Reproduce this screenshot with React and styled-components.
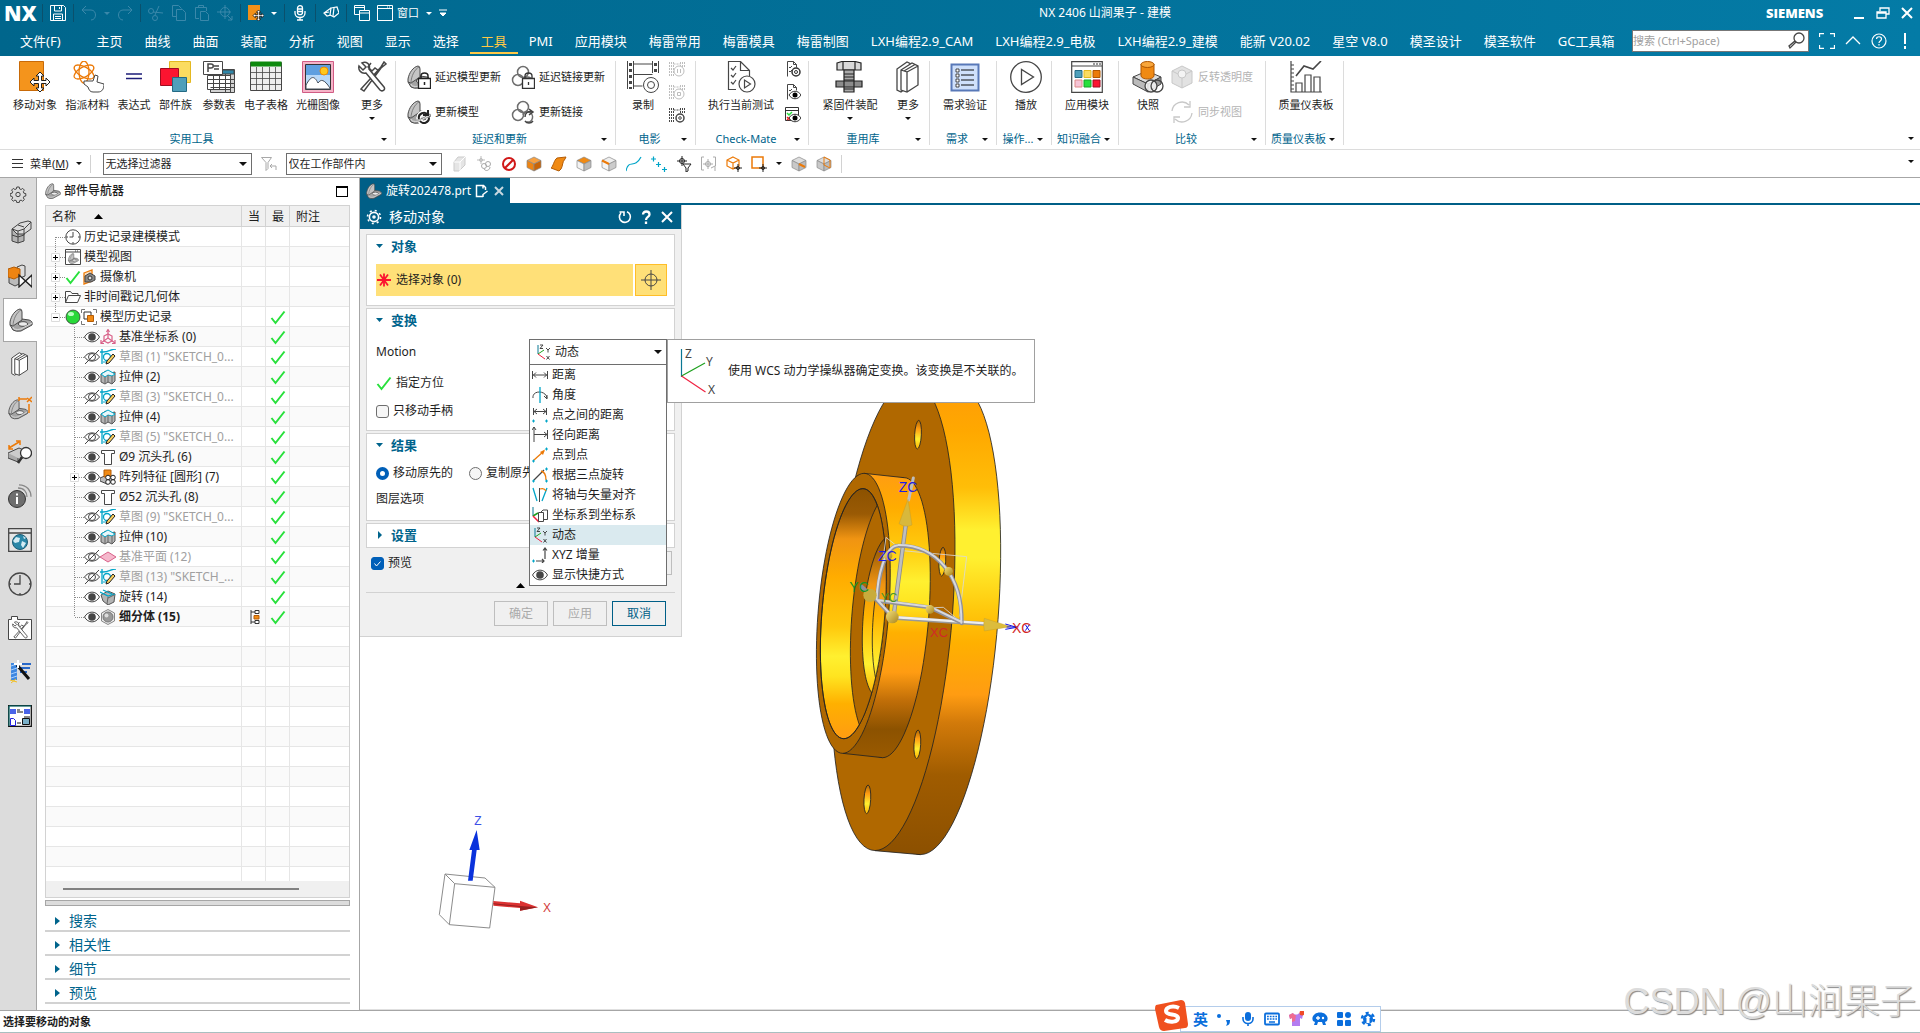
import React from "react";
import styled, { createGlobalStyle, css } from "styled-components";

const colors = {
  teal: "#005f87",
  link: "#00648c",
  text: "#1e1e1e",
  muted: "#a0a0a0",
  line: "#d2d2d2",
  edge: "#a6a6a6",
  panel: "#f0f0f0",
  orange: "#ec7a08",
  ink: "#464646",
  tick: "#28e03c",
  cyan: "#00a5c8",
};

const GlobalStyle = createGlobalStyle`
  * {
    box-sizing: border-box;
  }
  body {
    margin: 0;
    overflow: hidden;
    background: #fff;
    color: ${colors.text};
    font-family: "Noto Sans", "Noto Sans CJK SC", sans-serif;
    font-size: 12px;
    line-height: 16px;
  }
  button, input, select {
    font: inherit;
    color: inherit;
    margin: 0;
  }
  button {
    border: 0;
    padding: 0;
    background: none;
  }
  svg {
    display: block;
    flex: none;
  }
`;

/* ---------- icons ---------- */

const MOVE =
  "M21 11l4 4h-2.5v4.5H27V17l4 4-4 4v-2.5h-4.5V27H25l-4 4-4-4h2.5v-4.5H15V25l-4-4 4-4v2.5h4.5V15H17z";

const bracket = (
  <g stroke="#4a4a4a">
    <path d="M1 17l12-6 7 1q4 1 3 5l-11 6q-5 1-8-1z" fill="#a4a4a4" />
    <path d="M1 14C2 8 6 2 11 1q2 0 2 3v8L4 18l-3-1z" fill="#c4c4c4" />
    <path d="M4 18C4 11 8 4 12 2" fill="none" stroke="#7c7c7c" />
    <ellipse cx="14" cy="16" rx="4.500" ry="2.300" fill="#ececec" />
    <path d="M4 19l1 2q4 1 7 0l11-6" fill="none" stroke="#dadada" />
  </g>
);

const chain = (
  <g fill="none" stroke="#6e6e6e" strokeWidth="1.5">
    <circle cx="7" cy="15" r="5.5" />
    <circle cx="12" cy="7" r="5.5" />
    <path d="M12 15a5 5 0 1 1 4 7" />
  </g>
);

const film = (
  <g fill="none" stroke="currentColor">
    <path d="M.5 1v14M4.500 1v14M4.500 3h7M11.500 1v6M15.500 1v6M2.500 1v14M13.500 1v6" strokeDasharray="2 1" />
  </g>
);

const sheet = <path d="M2.500 15.500V.5h6l3 3v3M8.500.5v3h3M4 6l1 1 2-2M4 10l1 1 2-2" fill="none" stroke={colors.ink} />;

const wrench = (
  <g fill="#fff" stroke={colors.ink} strokeWidth="1.500">
    <path d="M5 28L25 6l3-5 2 2-5 4L8 30z" />
    <path d="M3 5l4 4 3-3-4-4c4-2 9 1 7 6l15 18c2 3-2 5-4 3L10 12C5 13 2 9 3 5z" />
    <path d="M15 2l-3 4 4 4 3-3 4 3" fill="none" />
  </g>
);

const books = (
  <g fill="#fff" stroke={colors.ink} strokeWidth="1.300">
    <path d="M5 8l10-7 4 2v20L9 31l-4-2z" />
    <path d="M9 9l11-7 6 3v19l-11 7-6-2zM9 9l6 2v20M15 11l11-6M12 10l11-6.500" />
  </g>
);

const cube = (a, b, c) => (
  <g stroke="#8a8a8a" strokeWidth=".7">
    <path d="M8 1l7 3.500-7 3.500-7-3.500z" fill={a} />
    <path d="M1 4.500L8 8v7l-7-3.500z" fill={b} />
    <path d="M15 4.500L8 8v7l7-3.500z" fill={c} />
  </g>
);

const target = (x, y, r, color) => (
  <g fill="none" stroke={color || "#222"}>
    <circle cx={x} cy={y} r={r - 1.5} />
    <path d={`M${x - r - 1} ${y}h${2 * r + 2}M${x} ${y - r - 1}v${2 * r + 2}`} />
  </g>
);

const eye = (
  <g>
    <path d="M.5 8C4 1.500 12 1.500 15.500 8 12 14.500 4 14.500.5 8z" fill="#fff" stroke={colors.ink} />
    <circle cx="8" cy="8" r="3.800" fill={colors.ink} />
  </g>
);

const gearShape = (
  <g fill="none" stroke="currentColor">
    <path d="M6.800 1h2.400l.4 1.900 1.500.6 1.600-1.100 1.700 1.700-1.100 1.600.6 1.500 1.900.4v2.400l-1.900.4-.6 1.500 1.100 1.600-1.700 1.700-1.600-1.100-1.500.6-.4 1.900H6.800l-.4-1.900-1.500-.6-1.600 1.100-1.700-1.700 1.100-1.600-.6-1.500L.2 10V7.600l1.900-.4.6-1.500-1.100-1.600 1.700-1.700 1.600 1.100 1.500-.6z" />
    <circle cx="8" cy="8.500" r="2.200" />
  </g>
);

const wcs = (
  <g fill="none">
    <path d="M3 1v9" stroke="#0b7894" />
    <path d="M3 10l6-4" stroke="#1ea01e" />
    <path d="M3 10l7 5" stroke="#f02040" />
    <path d="M5 1h3L5 4.500h3M11 4l2 2 2-2M13 6v2.500M11.500 12l3 3.500M14.500 12l-3 3.500" stroke="#333" strokeWidth=".9" />
  </g>
);

const icons = {
  save: [16, <g fill="none" stroke="#fff"><path d="M.5.5h13l2 2v13H.5z" /><path d="M4.500 1v5h7V1M9.500 2v2M3.500 15V9h9v6M5 11.500h6M5 13.500h6" /></g>],
  undo: [16, <path d="M5 1L1 5l4 4M1 5h9c6 0 6 10 0 10" fill="none" stroke="#3a88aa" />],
  redo: [16, <path d="M11 1l4 4-4 4M15 5H6C0 5 0 15 6 15" fill="none" stroke="#3a88aa" />],
  cut: [16, <g fill="none" stroke="#3a88aa"><circle cx="3" cy="6" r="2.500" /><circle cx="7" cy="13" r="2.500" /><path d="M5 7l10 1M7 10l4-9" /></g>],
  copy: [16, <path d="M5.500 4.500h6l3 3v8h-9zM5 11.500H1.500V.5h6l3 3" fill="none" stroke="#3a88aa" />],
  paste: [16, <path d="M5 13.500H1.500v-11h11V6M4.500 2.500V.5h5v2M6.500 6.500h5l3 3v6h-8z" fill="none" stroke="#3a88aa" />],
  csys: [16, <g fill="none" stroke="#3a88aa"><circle cx="8" cy="7" r="4.500" /><path d="M8 0v14M0 7h14M10 10l5 5M15 11v4h-4" /></g>],
  moveSmall: [16, <g><path d="M0 0h12v15H0z" fill="#f29018" /><path d={MOVE} transform="matrix(.55 0 0 .55 -1 -1)" fill="#fff" stroke="#111" strokeWidth="1.500" /></g>],
  mic: [16, <g fill="none" stroke="#fff" strokeWidth="1.300"><rect x="5.500" y=".7" width="5" height="9" rx="2.500" /><path d="M3 6v2c0 6 10 6 10 0V6M8 12v3M5 15h6M6 4h4M6 6.500h4" /></g>],
  eraser: [16, <g fill="none" stroke="#fff" strokeWidth="1.200"><path d="M8 3l6-1 2 6-5 4-4-2z" /><path d="M8 3L1 8l3 3 4-1M11 3l-1 8M1 8l5-1" /></g>],
  windows: [16, <g fill="none" stroke="#fff"><path d="M5 9.500H.5v-9h10V5M.5 2.500h10" /><path d="M5.500 5.500h10v10h-10zM5.500 8h10" /></g>],
  window: [16, <path d="M.5.5h15v15H.5zM.5 3.500h15M10 2h1M12 2h1" fill="none" stroke="#fff" />],
  magnifier: [18, <g fill="#fff" stroke={colors.ink} strokeWidth="1.300"><path d="M8 10l-6 6-1-2 6-5z" /><circle cx="11" cy="6" r="5" /></g>],
  full: [16, <path d="M.5 4V.5H5M11 .5h4.500V4M15.500 12v3.500H11M5 15.500H.5V12" fill="none" stroke="#fff" strokeWidth="1.300" />],
  up: [16, <path d="M1 11l7-7 7 7" fill="none" stroke="#fff" strokeWidth="1.300" />],
  help: [16, <g fill="none" stroke="#fff" strokeWidth="1.200"><circle cx="8" cy="8" r="7" /><path d="M5.500 6c0-3 5-3 5 0 0 2-2.500 2-2.500 4M8 11v1.500" /></g>],
  bang: [16, <path d="M8 0v11M8 13v3" stroke="#fff" strokeWidth="2" />],
  minimize: [16, <path d="M3 13h10" stroke="#fff" strokeWidth="2" />],
  restore: [16, <path d="M5 6V3h9v6h-3M2 7h9v6H2zM2 8h9" fill="none" stroke="#fff" strokeWidth="1.300" />],
  close: [16, <path d="M3 3l10 10M13 3L3 13" stroke="#fff" strokeWidth="2" />],

  move: [32, <g><path d="M.5.5h24v29H.5z" fill="#f4941c" stroke="#c86a08" /><path d={MOVE} fill="#fff" stroke="#222" /></g>],
  material: [32, <g><g fill="none" stroke="#ec7a08" strokeWidth="1.300"><ellipse cx="12" cy="11" rx="11" ry="5" transform="rotate(30 12 11)" /><ellipse cx="12" cy="11" rx="11" ry="5" transform="rotate(-30 12 11)" /><ellipse cx="12" cy="11" rx="11" ry="5" transform="rotate(90 12 11)" /></g><path d="M12 20h9l2-6 3 1-1 6 7 2c0 5-2 8-6 8h-5c-3 0-4-2-5-5l-4-3z" fill="#fff" stroke={colors.ink} /></g>],
  equals: [32, <path d="M8 13h16M8 17.500h16" stroke="#1c1c78" strokeWidth="1.500" />],
  family: [32, <g><path d="M9.500.5h21v21h-21z" fill="#fbdc60" stroke="#e4b820" /><path d="M.5 7.500h18v17H.5z" fill="#fb1430" stroke="#a00c20" /><path d="M12.500 16.500h14v14h-14z" fill="#4f9fba" stroke="#246a84" /></g>],
  params: [32, <g stroke={colors.ink}><path d="M7.500 8.500h24v23h-24z" fill="#d2d2d2" /><path d="M8 9h23v4H8z" fill="#2f86a8" /><path d="M4.500 14.500h23v14h-23z" fill="#fff" /><path d="M4.500 18.500h27M4.500 22.500h27M7.500 26.500h24M10.500 13v16M16.500 13v16M22.500 13v18M27.500 13v18" fill="none" /><path d="M.5.5h19v13H.5z" fill="#fff" /><path d="M5 11V3h3c3 0 3 4 0 4H5M11 5h5M11 8h5" fill="none" strokeWidth="1.500" /></g>],
  spreadsheet: [32, <g><path d="M.5 1.500h31v28H.5z" fill="#eee" stroke={colors.ink} /><path d="M.5.500h31v5H.5z" fill="#0d8a0d" /><path d="M.5 11.500h31M.5 17.500h31M.5 23.500h31M6.500 6v24M12.500 6v24M19.500 6v24M25.500 6v24" fill="none" stroke={colors.ink} strokeWidth=".8" /></g>],
  raster: [32, <g><path d="M.5.5h31v31H.5z" fill="#f5b4c8" stroke="#d05c84" /><path d="M3.500 3.500h25v25h-25z" fill="#b8d8f8" stroke="#333" /><path d="M4 4h24v10H4z" fill="#5f9fe0" /><circle cx="22" cy="10" r="4" fill="#ffc81e" stroke="#f08c00" /><path d="M4 24c5-9 8-10 12-2 3-4 6-4 12 5v1H4z" fill="#fff" stroke="#444c58" /></g>],
  tools: [32, wrench],
  lockModel: [24, <g>{bracket}<path d="M11.500 13.500h12v10h-12z" fill="#fff" stroke="#222" strokeWidth="1.300" /><path d="M14 13v-2c0-4 7-4 7 0v2M17.500 17v3" fill="none" stroke="#222" strokeWidth="1.500" /></g>],
  lockLink: [24, <g>{chain}<path d="M11.500 13.500h12v10h-12z" fill="#fff" stroke="#333" strokeWidth="1.300" /><path d="M14 13v-2c0-4 7-4 7 0v2M17.500 17v3" fill="none" stroke="#333" strokeWidth="1.300" /></g>],
  updateModel: [24, <g>{bracket}<g fill="none" strokeWidth="5" stroke="#fff"><path d="M12 19a5 5 0 0 1 9-4M22 18a5 5 0 0 1-9 3" /></g><path d="M12 19a5 5 0 0 1 9-4M21 10v5h-5M22 18a5 5 0 0 1-9 3" fill="none" stroke="#222" strokeWidth="2" /></g>],
  updateLink: [24, <g>{chain}<path d="M14 17a5 5 0 0 1 7-5M18 9l4 3-4 3M22 21a5 5 0 0 1-8 0" fill="none" stroke="#444" strokeWidth="1.500" /></g>],
  record: [32, <g fill="none" stroke={colors.ink}><path d="M.5 0v28M6.500 0v28M25.500 0v12M31.500 0v12M6.500 3h19M6.500 13.500h19M6.500 25h9" /><path d="M3.500 2v26M28.500 2v12" strokeWidth="3" strokeDasharray="3 3" /><circle cx="24" cy="24" r="7.500" fill="#fff" /><circle cx="24" cy="24" r="3.500" /></g>],
  filmPause: [16, <g opacity=".35">{film}<circle cx="10" cy="10" r="5" fill="#fff" stroke="currentColor" /><path d="M8.500 8v4M11.500 8v4" stroke="currentColor" /></g>],
  filmStop: [16, <g opacity=".35">{film}<circle cx="10" cy="10" r="5" fill="#fff" stroke="currentColor" /><path d="M8.500 8.500h3v3h-3z" fill="none" stroke="currentColor" /></g>],
  filmGear: [16, <g>{film}<circle cx="11" cy="11" r="4" fill="#fff" stroke="currentColor" strokeWidth="1.500" /><circle cx="11" cy="11" r="1.300" fill="none" stroke="currentColor" /></g>],
  runTest: [32, <g fill="none" stroke={colors.ink} strokeWidth="1.200"><path d="M11 28.500H3.500V.5h12l9 9V15M15.500.5v9h9M6 7l2 2 3-4M6 14l2 2 3-4M6 21l2 2 3-4" /><circle cx="22" cy="23" r="8" fill="#fff" /><path d="M19.500 19v8l6-4z" /></g>],
  sheetGear: [16, <g>{sheet}<circle cx="11" cy="11" r="4" fill="#fff" stroke="#333" strokeWidth="1.500" /><circle cx="11" cy="11" r="1.500" fill="none" stroke="#333" /></g>],
  sheetEye: [16, <g>{sheet}<path d="M4 11c3-5 9-5 12 0-3 5-9 5-12 0z" fill="#fff" stroke="#333" /><circle cx="10" cy="11" r="2.500" /></g>],
  winEye: [16, <g><path d="M.5.5h13v13H.5zM.5 3.500h13" fill="#fff" stroke="#333" /><path d="M2 6l2 2 3-3" fill="none" stroke={colors.tick} strokeWidth="1.500" /><path d="M2 10l3 3M5 10l-3 3" stroke="#e22" strokeWidth="1.300" /><path d="M4 11c3-5 9-5 12 0-3 5-9 5-12 0z" fill="#fff" stroke="#333" /><circle cx="10" cy="11" r="2.500" /></g>],
  bolt: [32, <g stroke="#222" strokeWidth="1.200"><path d="M3 2l5-1.500h13L27 2v7H3z" fill="#d8d8d8" /><path d="M9 1v8M21 1v8" /><path d="M10 9h10v22H10z" fill="#aaa" /><path d="M10 13h10M10 16h10M10 19h10M10 28h10" /><path d="M2 20h26v6H2z" fill="#8c8c8c" /><path d="M10 20v6M20 20v6" /></g>],
  books: [32, books],
  checklist: [32, <g><path d="M2.500 3.500h27v26h-27z" fill="#cfe0fb" stroke="#5878b8" strokeWidth="2" /><path d="M12 9h13M12 14h13M12 19h13M12 24h13" stroke="#111" /><path d="M7 8h3v3H7zM7 13h3v3H7zM7 18h3v3H7zM7 23h3v3H7z" fill="#fff" stroke="#222" strokeWidth=".8" /></g>],
  play: [32, <g fill="none" stroke={colors.ink} strokeWidth="1.300"><circle cx="16" cy="16" r="15.300" /><path d="M11.500 8.500v15l12-7.500z" /></g>],
  modules: [32, <g><path d="M.7.700h30.600v30.600H.7zM1 5h30" fill="#fff" stroke={colors.ink} strokeWidth="1.200" /><path d="M22 3h2M25 3h2M28 3h2" stroke="#333" /><g strokeWidth="1"><path d="M4 9.500h7v7H4z" fill="#4f9fba" stroke="#246a84" /><path d="M13 9.500h7v7h-7z" fill="#fbdc60" stroke="#e4b820" /><path d="M22 9.500h7v7h-7z" fill="#ec7a08" stroke="#b05600" /><path d="M4 19h7v7H4z" fill="#f5c4d6" stroke="#d88" /><path d="M13 19h7v7h-7z" fill="#28e03c" stroke="#18a028" /><path d="M22 19h7v7h-7z" fill="#fb1430" stroke="#a00c20" /></g></g>],
  snapshot: [32, <g stroke={colors.ink}><path d="M1 16l14-6 14 6-13 7z" fill="#ddd" /><path d="M1 16l15 7v8L1 23z" fill="#bbb" /><path d="M29 16l-13 7v8l13-8z" fill="#999" /><path d="M9 3v12c1 4 12 4 13 0V3z" fill="#f08a14" stroke="#b05600" /><ellipse cx="15.500" cy="3.500" rx="6.500" ry="3" fill="#f8a63c" stroke="#b05600" /><circle cx="19" cy="25" r="6" fill="#fff" fillOpacity=".8" strokeWidth="1.300" /><circle cx="25" cy="25" r="6" fill="none" strokeWidth="1.300" /></g>],
  cubeGrey: [24, <g stroke="#c8c8c8"><path d="M12 1l10 5v12l-10 5-10-5V6z" fill="#e2e2e2" /><path d="M2 6l10 5 10-5M12 11v12" fill="none" /><circle cx="12" cy="9" r="4" fill="#f4f4f4" /></g>],
  sync: [24, <path d="M2 11a10 10 0 0 1 17-6M20 1v6h-6M22 13a10 10 0 0 1-17 6M4 23v-6h6" fill="none" stroke="#c8c8c8" strokeWidth="1.300" />],
  chart: [32, <g fill="none" stroke={colors.ink} strokeWidth="1.200"><path d="M1 0v31h31M1 4h3M1 8h3M1 12h3M1 16h3M1 20h3M1 24h3M1 28h3" /><path d="M6 31v-9h6v9M15 31V14h6v17M24 31V16h6v15" /><path d="M6 15l8-10 9 3 8-8" strokeWidth="1.600" /></g>],

  filter: [16, <g fill="none" stroke="#a8a8a8"><path d="M.5 1.500h10l-3.500 5v6l-2 2v-8z" /><path d="M15 14v-4H9M11 8L9 10l2 2" /></g>],
  ghostCube: [16, <g opacity=".5"><path d="M7 1h7v8l-6 6H3V6z" fill="#ccc" stroke="#999" /><path d="M3 6h6l5-5M9 6v9" fill="none" stroke="#fff" /></g>],
  ghostLink: [16, <g>{target(5, 4, 3, "#bbb")}<g fill="none" stroke="#a8a8a8"><circle cx="8" cy="10" r="2.500" /><circle cx="12" cy="8" r="2.500" /><path d="M8 13c2 3 6 1 6-2" /></g></g>],
  forbid: [16, <g fill="none" stroke="#d01818" strokeWidth="2"><circle cx="8" cy="8" r="6" /><path d="M12 4l-8 8" /></g>],
  orangeCube: [16, cube("#f8a040", "#ee8412", "#c86408")],
  sheetBody: [16, <path d="M6 2l9-1-1 2c-3 3-2 7-4 10l-2 2-8-3c2-1 3-8 6-10z" fill="#f08a14" stroke="#b45c06" />],
  faceCube: [16, cube("#f08a14", "#f2f2f2", "#bbb")],
  edgeCube: [16, <g>{cube("#eee", "#f4f4f4", "#ccc")}<path d="M1 4.500L8 8" stroke={colors.orange} strokeWidth="2" /></g>],
  spline: [16, <path d="M0 15C3 2 8 14 15 1" fill="none" stroke={colors.cyan} strokeWidth="1.200" />],
  points: [16, <path d="M0 3h5M2.500.5v5M5 8.500h5M7.500 6v5M11 13.500h5M13.500 11v5" stroke={colors.cyan} strokeWidth="1.200" />],
  snapFilter: [16, <g>{target(6, 5, 4)}<path d="M7 8h8l-3 4v3l-2 1v-4z" fill="#fff" stroke="#222" /></g>],
  snapGhost: [16, <g>{target(7, 8, 4, "#aaa")}<path d="M3 1H.5v13H3M12 1h2.500v9M10 12l4-2v5" fill="none" stroke="#aaa" /></g>],
  cubeTarget: [16, <g><path d="M7 1l6 3v6l-6 3-6-3V4zM1 4l6 3 6-3M7 7v6" fill="none" stroke={colors.orange} strokeWidth="1.200" />{target(12, 12, 3)}</g>],
  boxTarget: [16, <g><path d="M1 1h11v11H1z" fill="none" stroke={colors.orange} strokeWidth="1.500" />{target(12, 12, 3)}</g>],
  shade: [16, <g>{cube("#ddd", "#c8c8c8", "#bbb")}<path d="M8 8l6 3" stroke={colors.orange} strokeWidth="2" /></g>],
  section: [16, <g>{cube("#ddd", "#c8c8c8", "#bbb")}<path d="M8 1l6 3v8l-6-3z" fill="none" stroke={colors.orange} /></g>],

  gear: [17, gearShape],
  parts: [24, <g stroke="#444"><path d="M4 9l6-2 6 2v12l-6 2-6-2z" fill="#b4b4b4" /><path d="M4 9l8-6 8-2 3 1v7l-7 5H9z" fill="#dcdcdc" /><path d="M4 9l6 2 6-2 7-7M10 11v12M4 15l6 2 6-2M16 9v6M10 5l6 2" fill="none" /></g>],
  constraint: [24, <g stroke="#444"><path d="M1 12v7l6 3 6-3v-7z" fill="#bbb" /><path d="M9 3l5-2 3 1v10l-5 2z" fill="#ddd" /><path d="M0 5l6-2 6 2v7l-6 3-6-2z" fill="#ee8412" stroke="#b45c06" /><path d="M11 11v12l13-12v12z" fill="#fff" stroke="#222" strokeWidth="1.300" /></g>],
  part: [24, bracket],
  partDims: [24, <g><g transform="translate(0 3) scale(.85)">{bracket}</g><path d="M11 3h8M11 1v4M19 2l5 4M19 6l5-5M21 8v9" fill="none" stroke={colors.orange} strokeWidth="1.500" /></g>],
  measure: [24, <g><path d="M0 13l11-5 12 5-13 8-10-4z" fill="#ccc" stroke="#444" /><path d="M0 13v5l10 4v-4" fill="#aaa" stroke="#444" /><path d="M1 8l10-6M1 5v4h4M8 1h4v4" fill="none" stroke={colors.orange} strokeWidth="1.500" /><circle cx="18" cy="13" r="5.500" fill="#fff" stroke="#333" strokeWidth="1.300" /><path d="M14 17l-4 6" stroke="#333" strokeWidth="2.500" /></g>],
  info: [24, <g><circle cx="9" cy="15" r="8.500" fill="#6e6e6e" stroke="#333" /><path d="M9 13v7M9 9.500v2" stroke="#fff" strokeWidth="2" /><path d="M10 4c6 0 9 4 9 9M11 .8c8 0 12 6 12 12" fill="none" stroke="#888" strokeWidth="1.300" /></g>],
  web: [24, <g><path d="M.7.700h22.600v22.600H.7zM1 5h22" fill="#e6e6e6" stroke={colors.ink} strokeWidth="1.300" /><circle cx="12" cy="14" r="7.500" fill="#2a87a8" stroke="#1c5c74" /><path d="M8 9l4 1-1 4-4 1-2-2zM14 13l4 2-3 5-2-3zM15 8l3 2-2 1z" fill="#d4ecf4" /></g>],
  clock: [24, <g fill="none" stroke={colors.ink} strokeWidth="1.300"><circle cx="12" cy="12" r="11" /><path d="M12 3v9H6M12 21v2M21 12h2M1 12h2" /></g>],
  toolbox: [24, <g><path d="M.5 3.500h3v-3h6v3h14v20H.5z" fill="#fff" stroke={colors.ink} /><g transform="translate(3 5) scale(.57)">{wrench}</g></g>],
  wizard: [24, <g><path d="M3 3h6v17H3z" fill="#3f88e0" /><path d="M3 6l6-2M3 10l6-2M3 14l6-2M3 18l6-2" stroke="#a8d0ff" /><path d="M9 4h14M10 8h12M12 12h7" stroke="#2868c8" strokeWidth="2" /><path d="M9 5l12 14" stroke="#111" strokeWidth="3" /><path d="M10 0v8M6 4h8" stroke="#fff" strokeWidth="2" /><path d="M2 20l7 2M3 23l5-4" stroke="#f4c020" /></g>],
  roles: [24, <g><path d="M.7 1.700h22.600v20.600H.7z" fill="#fff" stroke="#111" strokeWidth="1.300" /><path d="M1 22V2h22" fill="none" stroke="#0a7878" /><path d="M2 5h6v5H2zM16 5h6v5h-6z" fill="#4a64e8" /><path d="M9 6h3M9 8h6M16 13h6M9 19h4" stroke="#111" /><path d="M2.500 14.500h3l2 2v5h-5z" fill="#fff" stroke="#22d" /><path d="M14.500 14.500h7v6h-7z" fill="#7ab0c8" stroke="#111" /></g>],

  clockSmall: [16, <g fill="#fff" stroke={colors.ink}><circle cx="8" cy="8" r="7.200" /><path d="M8 3v5H4.500M8 13v2M13 8h2M1 8h2" /></g>],
  modelView: [16, <g><path d="M.5.500h15v15H.5zM.5 3h15M10 2h1M12 2h1" fill="#fff" stroke={colors.ink} /><g transform="translate(3 4) scale(.45)">{bracket}</g></g>],
  tick: [16, <path d="M1.500 9l4 5L14.500 2.500" fill="none" stroke={colors.tick} strokeWidth="2" />],
  camera: [16, <g><path d="M3 4l8-3v11l-8 3z" fill="#fde0c0" stroke={colors.orange} strokeWidth="1.300" /><path d="M4 7l5-3 5 3v4l-4 2-6 0z" fill="#888" stroke="#444" /><circle cx="9" cy="9" r="2" fill="#ddd" stroke="#333" /></g>],
  folder: [16, <path d="M.5 13.500v-11h5l1.500 2h6v2M.5 13.500h12l3-7h-12z" fill="#fff" stroke={colors.ink} />],
  history: [16, <g><circle cx="8" cy="8" r="7" fill="#28d838" stroke="#333" strokeWidth=".8" /><ellipse cx="6" cy="5" rx="3" ry="2" fill="#b8ffc0" /></g>],
  model: [16, <g fill="none"><path d="M.5 4V.5H4M12 .5h3.500V4M15.500 12v3.500H12M4 15.500H.5V12" stroke="#777" /><path d="M3 3h7v7H3z" fill="#fff" stroke="#333" /><path d="M6.500 6.500h6v6h-6z" fill="#f08a14" stroke="#b45c06" /></g>],
  eye: [16, eye],
  eyeOff: [16, <g fill="none" stroke={colors.ink}><path d="M.5 8C4 2.500 12 2.500 15.500 8 12 13.500 4 13.500.5 8zM1 15L15 1" /><circle cx="8" cy="8" r="3.500" /></g>],
  datum: [16, <g fill="none" stroke="#d86088" strokeWidth="1.200"><path d="M8 1v8L1 14M8 9l7 5" /><path d="M6.500 3L8 .5 9.500 3M4 7l4-2 4 2v5l-4 2-4-2zM1 11v3.500h3M15 11v3.500h-3" /></g>],
  sketch: [16, <g fill="none"><path d="M2 0v15M0 3h3c6 0 8-3 13-3" stroke={colors.cyan} strokeWidth="1.300" /><circle cx="7" cy="8" r="3.500" stroke={colors.cyan} strokeWidth="1.300" /><path d="M3 13h4" stroke={colors.cyan} /><path d="M13 5l2 2-6 7-3 1 1-3z" fill="#fbd060" stroke="#222" /></g>],
  extrude: [16, <g><path d="M1 5l5-3 4 2 5-1v9l-3 3-4-2-3 2-4-2z" fill="#b4b4b4" stroke="#555" /><path d="M1 5l7-4 7 4-3 2-4-1-3 2z" fill="#e8f6fa" stroke={colors.cyan} /><path d="M5 8v6M8 6v7M12 7v7" stroke="#666" /></g>],
  hole: [16, <path d="M1.500 1.500h13v3h-3v11h-7v-11h-3z" fill="#fff" stroke={colors.ink} />],
  pattern: [16, <g><path d="M0 9l7-3 7 3v3l-7 3-7-3z" fill="#bbb" stroke="#444" /><path d="M4 1h7v7H4z" fill="#f08a14" stroke="#b45c06" /><g fill="#fff" stroke="#222"><circle cx="8" cy="8.500" r="2.300" /><circle cx="13" cy="8.500" r="2.300" /><circle cx="8" cy="13" r="2.300" /><circle cx="13" cy="13" r="2.300" /></g></g>],
  plane: [16, <path d="M0 8l8-5 8 5-8 5z" fill="#f5b8cc" stroke="#d86088" />],
  revolve: [16, <g><path d="M1 6l7-4 7 3-1 8-6 3-5-4z" fill="#b4b4b4" stroke="#555" /><path d="M0 3l8 4 7-2M3 1l9 4" fill="none" stroke={colors.cyan} strokeWidth="1.300" /><path d="M8 8l-1 7M14 6l-6 3" stroke="#666" /></g>],
  subdiv: [16, <g><path d="M8 .5l6.500 3.500v8L8 15.500 1.500 12V4z" fill="#e8e8e8" stroke="#888" /><circle cx="8" cy="8" r="5" fill="#9a9a9a" stroke="#777" /><circle cx="6.500" cy="6.500" r="2" fill="#ddd" /></g>],
  nodes: [16, <g fill="#fff" stroke="#333"><path d="M5 1v14M5 3h4M5 13h4" /><path d="M9 1.500h4v3H9zM9 11.500h4v3H9z" /><path d="M8 6.500h5v3.500H8z" fill="#f08a14" stroke="#b45c06" /></g>],

  dialogGear: [16, <g fill="none" stroke="#fff" strokeWidth="1.600"><circle cx="8" cy="8" r="4.600" /><circle cx="8" cy="8" r="6.500" strokeDasharray="2 3.100" /><circle cx="8" cy="8" r="1" /></g>],
  reset: [16, <path d="M10 2.800a5.500 5.500 0 1 1-6 1.200M7 7V3H2.500" fill="none" stroke="#fff" strokeWidth="1.600" />],
  question: [16, <path d="M5 5.500c0-4 6.500-4 6.500 0C11.500 8 8 8 8 11M8 12.500v2.500" fill="none" stroke="#fff" strokeWidth="2.300" />],
  star: [16, <path d="M8 1.500v13M1 8h14M4 2.500l8 11M12 2.500l-8 11" stroke="#fb1430" strokeWidth="1.800" />],
  crosshair: [20, <g fill="none" stroke={colors.ink}><circle cx="10" cy="10" r="6" /><path d="M10 0v20M0 10h20" /></g>],
  wcs: [16, wcs],
  distance: [16, <path d="M.5 4v8M15.500 4v8M1 8h14M4 5.500L1.500 8 4 10.500M12 5.500L14.500 8 12 10.500" fill="none" stroke={colors.ink} />],
  angle: [16, <g fill="none"><path d="M1 11C0 3 14 3 15 11M12 9l3 3v-4" stroke={colors.ink} /><path d="M8 0v16" stroke={colors.cyan} strokeWidth="1.300" /></g>],
  between: [16, <g fill="none"><path d="M1.500 1v7M14.500 1v7M2 4.500h12M5 2L2 4.500 5 7M11 2l3 2.500L11 7" stroke={colors.ink} /><path d="M0 14h3M1.500 12.500v3M13 14h3M14.500 12.500v3" stroke={colors.cyan} /></g>],
  radial: [16, <path d="M2 0v15M2 0L0 3M2 0l2 3M2 7.500h13M12 5l3 2.500L12 10M15.500 3v9" fill="none" stroke={colors.ink} />],
  p2p: [16, <g><path d="M2 13L12 4" stroke={colors.orange} strokeWidth="1.300" /><path d="M13 2.500L8 5l3 3z" fill={colors.orange} /><path d="M0 14h3M1.500 12.500v3M13 2h3M14.500.5v3" stroke={colors.cyan} /></g>],
  threePoint: [16, <g fill="none"><path d="M2 13L12 3" stroke={colors.ink} strokeWidth="1.300" /><path d="M9 4c4 1 5 4 5 9" stroke={colors.orange} strokeWidth="1.300" /><path d="M0 14h3M1.500 12.500v3M13 2h3M14.500.5v3M13 14h3M14.500 12.500v3" stroke={colors.cyan} /></g>],
  axisVec: [16, <g fill="none"><path d="M1 1l4 13M15 1l-5 13" stroke={colors.cyan} strokeWidth="1.300" /><path d="M7.500 1v14" stroke={colors.ink} /><path d="M8 2c3-1 5 0 6 2" stroke={colors.orange} strokeWidth="1.300" /></g>],
  csys2: [16, <g fill="none"><path d="M1 0v9" stroke="#0b7894" /><path d="M1 9l5-3" stroke="#1ea01e" strokeWidth="1.500" /><path d="M1 9l6 6" stroke="#f02040" strokeWidth="1.500" /><path d="M6.500 5.500h5v9h-5zM9 5l2-2h4.500v9.500H12" fill="#fff" stroke={colors.ink} /></g>],
  xyzInc: [16, <g fill="none"><path d="M4 14h8M10 12l2 2-2 2M13 12V1M11 3.500L13 1l2 2.500" stroke={colors.ink} strokeWidth="1.200" /><path d="M0 14h3M1.500 12.500v3" stroke={colors.cyan} /></g>],
  fileEdit: [14, <path d="M8 12.500H1.500v-11h7l2 2V6M12.500 7L8 10.500V13M8 1.500v3" fill="none" stroke="#fff" strokeWidth="1.500" />],
  tabClose: [12, <path d="M2 2l8 8M10 2l-8 8" stroke="#c8d8e0" strokeWidth="2" />],

  comma: [16, <g fill="#0a6edc"><circle cx="3" cy="5" r="2" /><path d="M10 9h4c0 4-1 5-4 6 1-2 1-3 1-3z" /></g>],
  imeMic: [16, <g><rect x="5" y="1" width="6" height="9" rx="3" fill="#0a6edc" /><path d="M3 6v2c0 6 10 6 10 0V6M8 12v3" fill="none" stroke="#0a6edc" strokeWidth="1.600" /></g>],
  keyboard: [16, <g fill="none" stroke="#0a6edc"><rect x="1" y="2.500" width="14" height="11" rx="1" strokeWidth="1.800" /><path d="M3 5.500h10M3 8h10" strokeWidth="1.600" strokeDasharray="1.800 1" /><path d="M5 11h6" strokeWidth="1.500" /></g>],
  shirt: [16, <g><path d="M1 4l4-2c1 2 5 2 6 0l4 2-1 4-2-1v8H4V7L2 8z" fill="#b47cf0" /><path d="M1 4l4-2c1 2 2 2 3 2l-1 6-3 1V7L2 8z" fill="#f06c90" /><circle cx="14" cy="2" r="2.500" fill="#f04a28" /></g>],
  game: [16, <g><path d="M3 3c2-2 8-2 10 0 3 2 3 5 2 7l-2 1 1 3h-3l-1-3H6l-1 3H2l1-3-2-1C0 8 0 5 3 3z" fill="#0a6edc" /><path d="M4 7h4M6 5v4" stroke="#fff" strokeWidth="1.300" /><circle cx="11" cy="7" r="1.200" fill="#fff" /></g>],
  apps: [16, <g fill="#0a6edc"><rect x="1" y="1" width="6" height="6" rx="1" /><rect x="9" y="1" width="6" height="6" rx="3" /><rect x="1" y="9" width="6" height="6" rx="1" /><rect x="9" y="9" width="6" height="6" rx="1" /></g>],
  imeGear: [16, <g><circle cx="8" cy="8" r="5" fill="#0a6edc" /><circle cx="8" cy="8" r="6" fill="none" stroke="#0a6edc" strokeWidth="2.500" strokeDasharray="3.100 3.200" /><path d="M8 4.500l2.500 2.500H9.500v5h-3V7h-1z" fill="#fff" /></g>],
};

function Icon({ name, size }) {
  const [box, art] = icons[name];
  const s = size || box;
  return (
    <svg width={s} height={s} viewBox={`0 0 ${box} ${box}`} aria-hidden="true">
      {art}
    </svg>
  );
}

function Caret({ big, color = "#111" }) {
  return (
    <svg width={big ? 8 : 6} height={big ? 4 : 3} viewBox="0 0 8 4" aria-hidden="true">
      <path d="M0 0h8L4 4z" fill={color} />
    </svg>
  );
}

/* ---------- header ---------- */

const Header = styled.header`
  background: linear-gradient(90deg, #00668c, #047ba6);
  color: #fff;
`;

const TitleBar = styled.div`
  display: flex;
  align-items: center;
  height: 26px;
  padding: 0 5px 0 4px;
`;

const Logo = styled.strong`
  width: 38px;
  font-family: "Open Sans", sans-serif;
  font-size: 21px;
  line-height: 26px;
  font-weight: 800;
`;

const VSep = styled.span`
  width: 1px;
  height: 18px;
  flex: none;
  margin-right: ${(p) => p.$gap || 7}px;
  background: ${(p) => p.$color || "#0a506c"};
`;

const QuickButton = styled.button`
  display: flex;
  align-items: center;
  gap: 4px;
  margin-right: 7px;
  font-size: 11px;
`;

const WindowTitle = styled.div`
  flex: 1;
  padding-right: 10px;
  text-align: center;
`;

const Brand = styled.strong`
  width: 77px;
  font-family: "Open Sans", sans-serif;
  font-size: 13px;
  font-weight: 800;
`;

const WindowButton = styled.button`
  margin-left: 8px;
`;

const TabBar = styled.nav`
  display: flex;
  align-items: stretch;
  height: 30px;
  padding: 0 7px 0 9px;
`;

const MenuTab = styled.button`
  flex: none;
  padding: 0 11px;
  margin-right: ${(p) => (p.$file ? 14 : 0)}px;
  font-size: 13px;
  white-space: nowrap;
  ${(p) =>
    p.$active &&
    css`
      color: #ffc846;
      background: linear-gradient(#ffc846, #ffc846) 0 26px / 100% 2px no-repeat;
    `}
`;

const SearchBox = styled.label`
  display: flex;
  align-items: center;
  align-self: center;
  width: 177px;
  height: 22px;
  margin: 0 0 0 auto;
  padding-right: 2px;
  background: #fff;
  border: 1px solid #777;
  input {
    flex: 1;
    min-width: 0;
    border: 0;
    padding: 0;
    outline: 0;
    background: none;
    font-size: 11px;
    color: #222;
  }
  input::placeholder {
    color: #a0a0a0;
  }
`;

const HeaderTools = styled.div`
  display: flex;
  align-items: center;
  gap: 10px;
  margin-left: 10px;
`;

const tabs = [
  "文件(F)", "主页", "曲线", "曲面", "装配", "分析", "视图", "显示", "选择", "工具", "PMI",
  "应用模块", "梅雷常用", "梅雷模具", "梅雷制图", "LXH编程2.9_CAM", "LXH编程2.9_电极",
  "LXH编程2.9_建模", "能新 V20.02", "星空 V8.0", "模圣设计", "模圣软件", "GC工具箱",
];

const quick = [
  "save", "|", "undo", "v", "redo", "|", "cut", "copy", "paste", "csys", "|",
  "moveSmall", "v", "|", "mic", "|", "eraser", "|", "windows",
];

function AppHeader() {
  return (
    <Header>
      <TitleBar>
        <Logo>NX</Logo>
        <VSep />
        {quick.map((name, i) => {
          if (name === "|") return <VSep key={i} />;
          if (name === "v")
            return (
              <QuickButton key={i} aria-label="更多">
                <Caret color={i === 3 ? "#3a88aa" : "#fff"} />
              </QuickButton>
            );
          return (
            <QuickButton key={i} aria-label={name}>
              <Icon name={name} />
            </QuickButton>
          );
        })}
        <QuickButton>
          <Icon name="window" />
          窗口
        </QuickButton>
        <QuickButton aria-label="窗口列表">
          <Caret color="#fff" />
        </QuickButton>
        <QuickButton aria-label="自定义">
          <svg width="8" height="8" viewBox="0 0 8 8">
            <path d="M0 1h8M1 4h6L4 7z" fill="#fff" stroke="#fff" />
          </svg>
        </QuickButton>
        <WindowTitle>NX 2406 山涧果子 - 建模</WindowTitle>
        <Brand>SIEMENS</Brand>
        {["minimize", "restore", "close"].map((n) => (
          <WindowButton key={n} aria-label={n}>
            <Icon name={n} />
          </WindowButton>
        ))}
      </TitleBar>
      <TabBar>
        {tabs.map((t, i) => (
          <MenuTab key={t} $file={i === 0} $active={t === "工具"}>
            {t}
          </MenuTab>
        ))}
        <SearchBox>
          <input placeholder="搜索 (Ctrl+Space)" aria-label="搜索" />
          <Icon name="magnifier" />
        </SearchBox>
        <HeaderTools>
          {["full", "up", "help", "bang"].map((n) => (
            <button key={n} aria-label={n}>
              <Icon name={n} />
            </button>
          ))}
        </HeaderTools>
      </TabBar>
    </Header>
  );
}

/* ---------- ribbon ---------- */

const RibbonBar = styled.div`
  display: flex;
  height: 94px;
  padding: 5px 0 4px;
  border-bottom: 1px solid #dcdcdc;
  font-size: 11px;
`;

const RibbonGroup = styled.section`
  display: flex;
  flex-direction: column;
  justify-content: space-between;
  flex: none;
  width: ${(p) => p.$w}px;
  border-right: 1px solid #dcdcdc;
`;

const GroupTools = styled.div`
  display: flex;
  padding-left: 9px;
`;

const GroupLabel = styled.div`
  display: flex;
  align-items: center;
  height: 12px;
  padding: 0 8px 0 2px;
  color: ${colors.link};
  span {
    flex: 1;
    text-align: center;
    white-space: nowrap;
  }
`;

const Tool = styled.button`
  display: flex;
  flex-direction: column;
  align-items: center;
  flex: none;
  width: ${(p) => p.$w}px;
  gap: 4px;
  white-space: nowrap;
`;

const MiniGrid = styled.div`
  display: grid;
  grid-template-columns: repeat(${(p) => p.$cols}, max-content);
  grid-auto-rows: 35px;
  column-gap: 10px;
  padding-left: 2px;
  margin-top: -2px;
`;

const MiniTool = styled.button`
  display: flex;
  align-items: center;
  gap: 4px;
  color: ${(p) => (p.disabled ? "#b4b4b4" : "inherit")};
`;

const TinyStack = styled.div`
  display: flex;
  flex-direction: column;
  gap: 7px;
  padding-left: 8px;
  color: ${colors.ink};
`;

const BarEnd = styled.div`
  display: flex;
  align-items: flex-end;
  margin-left: auto;
  padding: 0 6px 5px;
`;

const groups = [
  {
    label: "实用工具", w: 396,
    tools: [
      ["move", "移动对象", 52], ["material", "指派材料", 53], ["equals", "表达式", 40],
      ["family", "部件族", 43], ["params", "参数表", 44], ["spreadsheet", "电子表格", 50],
      ["raster", "光栅图像", 54], ["tools", "更多", 54, true],
    ],
  },
  {
    label: "延迟和更新", w: 220,
    minis: [["lockModel", "延迟模型更新"], ["lockLink", "延迟链接更新"], ["updateModel", "更新模型"], ["updateLink", "更新链接"]],
    cols: 2,
  },
  { label: "电影", w: 80, tools: [["record", "录制", 36]], tiny: ["filmPause", "filmStop", "filmGear"] },
  { label: "Check-Mate", w: 113, tools: [["runTest", "执行当前测试", 72]], tiny: ["sheetGear", "sheetEye", "winEye"] },
  { label: "重用库", w: 121, tools: [["bolt", "紧固件装配", 64, true], ["books", "更多", 52, true]] },
  { label: "需求", w: 67, tools: [["checklist", "需求验证", 52]] },
  { label: "操作...", w: 55, tools: [["play", "播放", 40]] },
  { label: "知识融合", w: 67, tools: [["modules", "应用模块", 52]] },
  { label: "比较", w: 147, tools: [["snapshot", "快照", 40]], minis: [["cubeGrey", "反转透明度", true], ["sync", "同步视图", true]], cols: 1 },
  { label: "质量仪表板", w: 78, tools: [["chart", "质量仪表板", 62]] },
];

function Ribbon() {
  return (
    <RibbonBar>
      {groups.map((g) => (
        <RibbonGroup key={g.label} $w={g.w}>
          <GroupTools>
            {(g.tools || []).map(([icon, label, w, more]) => (
              <Tool key={label} $w={w}>
                <Icon name={icon} />
                {label}
                {more && <Caret />}
              </Tool>
            ))}
            {g.tiny && (
              <TinyStack>
                {g.tiny.map((n) => (
                  <button key={n} aria-label={n}>
                    <Icon name={n} />
                  </button>
                ))}
              </TinyStack>
            )}
            {g.minis && (
              <MiniGrid $cols={g.cols}>
                {g.minis.map(([icon, label, off]) => (
                  <MiniTool key={label} disabled={off}>
                    <Icon name={icon} />
                    {label}
                  </MiniTool>
                ))}
              </MiniGrid>
            )}
          </GroupTools>
          <GroupLabel>
            <span>{g.label}</span>
            <Caret />
          </GroupLabel>
        </RibbonGroup>
      ))}
      <BarEnd>
        <Caret />
      </BarEnd>
    </RibbonBar>
  );
}

/* ---------- selection bar ---------- */

const SelectionRow = styled.div`
  display: flex;
  align-items: center;
  height: 28px;
  padding-left: 12px;
  border-bottom: 1px solid ${colors.edge};
  font-size: 11px;
`;

const MenuButton = styled.button`
  display: flex;
  align-items: center;
  gap: 7px;
  margin-right: 8px;
`;

const ComboWrap = styled.span`
  display: flex;
  align-items: center;
  flex: none;
  width: ${(p) => p.$w}px;
  height: ${(p) => p.$h || 22}px;
  padding-right: 4px;
  background: #fff;
  border: 1px solid #6e6e6e;
  select {
    flex: 1;
    min-width: 0;
    appearance: none;
    border: 0;
    padding: 0 2px;
    background: none;
    outline: 0;
  }
`;

const IconStrip = styled.div`
  display: flex;
  align-items: center;
  gap: 9px;
  margin: 0 9px;
`;

function SelectionBar() {
  return (
    <SelectionRow>
      <MenuButton>
        <svg width="11" height="9" viewBox="0 0 11 9">
          <path d="M0 .5h11M0 4.500h11M0 8.500h11" stroke="#333" />
        </svg>
        <span>
          菜单(<u>M</u>)
        </span>
        <Caret />
      </MenuButton>
      <VSep $color="#d2d2d2" $gap={12} />
      <ComboWrap $w={149}>
        <select aria-label="选择过滤器">
          <option>无选择过滤器</option>
        </select>
        <Caret big />
      </ComboWrap>
      <IconStrip>
        <Icon name="filter" />
      </IconStrip>
      <ComboWrap $w={156}>
        <select aria-label="选择范围">
          <option>仅在工作部件内</option>
        </select>
        <Caret big />
      </ComboWrap>
      <IconStrip>
        {["ghostCube", "ghostLink", "forbid", "orangeCube", "sheetBody", "faceCube", "edgeCube", "spline", "points", "snapFilter", "snapGhost", "cubeTarget", "boxTarget"].map((n) => (
          <button key={n} aria-label={n}>
            <Icon name={n} />
          </button>
        ))}
        <Caret />
        {["shade", "section"].map((n) => (
          <button key={n} aria-label={n}>
            <Icon name={n} />
          </button>
        ))}
      </IconStrip>
      <VSep $color="#d2d2d2" />
      <BarEnd>
        <Caret />
      </BarEnd>
    </SelectionRow>
  );
}

/* ---------- resource bar and part navigator ---------- */

const Workspace = styled.main`
  display: flex;
  flex: 1;
  min-height: 0;
`;

const ResourceBar = styled.nav`
  width: 37px;
  flex: none;
  padding-left: 3px;
  background: #dcdcdc;
  border-right: 1px solid ${colors.edge};
`;

const ResourceButton = styled.button`
  display: flex;
  align-items: center;
  justify-content: center;
  width: ${(p) => (p.$small ? 30 : p.$active ? 34 : 33)}px;
  height: ${(p) => (p.$small ? 32 : 44)}px;
  color: #444;
  ${(p) =>
    p.$active &&
    css`
      background: #fff;
      border: 1px solid ${colors.edge};
      border-right: 0;
    `}
`;

const Navigator = styled.aside`
  display: flex;
  flex-direction: column;
  flex: none;
  width: 323px;
  padding: 0 9px 0 8px;
  border-right: 1px solid ${colors.edge};
`;

const NavTitle = styled.h2`
  display: flex;
  align-items: center;
  justify-content: space-between;
  height: 27px;
  flex: none;
  margin: 0;
  padding: 0 2px 1px 0;
  font-size: 12px;
  font-weight: 500;
  span {
    display: flex;
    align-items: center;
    gap: 3px;
  }
`;

const Maximize = styled.button`
  width: 12px;
  height: 11px;
  border: 1px solid #000;
  border-top-width: 2px;
`;

const TreeBox = styled.div`
  display: flex;
  flex-direction: column;
  flex: 1;
  min-height: 0;
  border: 1px solid ${colors.line};
`;

const TreeScroll = styled.div`
  flex: 1;
  min-height: 0;
  overflow: hidden;
`;

const Tree = styled.table`
  width: 100%;
  table-layout: fixed;
  border-spacing: 0;
  th {
    height: 21px;
    padding: 1px 0 0 6px;
    background: ${colors.panel};
    border-right: 1px solid ${colors.line};
    border-bottom: 1px solid ${colors.line};
    font-weight: 400;
    text-align: left;
  }
  td {
    height: 20px;
    padding: 0;
    border-right: 1px solid #e6e6e6;
    border-bottom: 1px solid #e6e6e6;
  }
  td:last-child, th:last-child {
    border-right: 0;
  }
  tbody tr:nth-child(even) {
    background: #fafafa;
  }
  td:nth-child(n + 2) svg {
    margin: 0 4px;
  }
`;

const SortHead = styled.span`
  display: flex;
  align-items: center;
  gap: 18px;
`;

const TreeName = styled.div`
  display: flex;
  align-items: center;
  height: 19px;
  padding-left: ${(p) => (p.$level ? 24 : 5)}px;
  overflow: hidden;
  white-space: nowrap;
  color: ${(p) => (p.$dim ? colors.muted : "inherit")};
  font-weight: ${(p) => (p.$bold ? 700 : 400)};
  span {
    padding-left: 3px;
  }
`;

const HScroll = styled.div`
  height: 16px;
  padding: 7px 50px 0 17px;
  background: ${colors.panel};
  &::before {
    content: "";
    display: block;
    height: 2px;
    background: #828282;
  }
`;

const Splitter = styled.div`
  height: 6px;
  flex: none;
  margin: 2px 0;
  background: #dcdcdc;
  border: 1px solid ${colors.edge};
`;

const Fold = styled.button`
  display: flex;
  align-items: center;
  gap: 9px;
  height: 24px;
  flex: none;
  padding: 3px 0 0 10px;
  border-bottom: 2px solid ${colors.line};
  color: ${colors.link};
  font-size: 14px;
`;

const FoldSpace = styled.div`
  height: 6px;
  flex: none;
`;

// dotted connector with an optional +/- box
function Branch({ box, first, last }) {
  return (
    <svg width="14" height="20" viewBox="0 0 14 20" aria-hidden="true">
      <path
        d={`M4.500 ${first ? 10 : 0}V${last ? 10 : 20}M5 10.500h9`}
        stroke="#8c8c8c"
        strokeDasharray="1 1"
        fill="none"
      />
      {box && (
        <g>
          <path d="M.5 6.500h8v8h-8z" fill="#fff" stroke="#dcdcdc" />
          <path d={box === "+" ? "M2 10.500h5M4.500 8v5" : "M2 10.500h5"} stroke="#000" />
        </g>
      )}
    </svg>
  );
}

const resourceIcons = ["gear", "parts", "constraint", "part", "books", "partDims", "measure", "info", "web", "clock", "toolbox", "wizard", "roles"];

const treeRows = [
  { name: "历史记录建模模式", icons: ["clockSmall"], first: true },
  { name: "模型视图", icons: ["modelView"], box: "+" },
  { name: "摄像机", icons: ["tick", "camera"], box: "+" },
  { name: "非时间戳记几何体", icons: ["folder"], box: "+" },
  { name: "模型历史记录", icons: ["history", "model"], box: "-", last: true, ok: true },
  { name: "基准坐标系 (0)", icons: ["eye", "datum"], level: 1 },
  { name: '草图 (1) "SKETCH_0...', icons: ["eyeOff", "sketch"], level: 1, dim: true },
  { name: "拉伸 (2)", icons: ["eye", "extrude"], level: 1 },
  { name: '草图 (3) "SKETCH_0...', icons: ["eyeOff", "sketch"], level: 1, dim: true },
  { name: "拉伸 (4)", icons: ["eye", "extrude"], level: 1 },
  { name: '草图 (5) "SKETCH_0...', icons: ["eyeOff", "sketch"], level: 1, dim: true },
  { name: "Ø9 沉头孔 (6)", icons: ["eye", "hole"], level: 1 },
  { name: "阵列特征 [圆形] (7)", icons: ["eye", "pattern"], level: 1, box: "+" },
  { name: "Ø52 沉头孔 (8)", icons: ["eye", "hole"], level: 1 },
  { name: '草图 (9) "SKETCH_0...', icons: ["eyeOff", "sketch"], level: 1, dim: true },
  { name: "拉伸 (10)", icons: ["eye", "extrude"], level: 1 },
  { name: "基准平面 (12)", icons: ["eyeOff", "plane"], level: 1, dim: true },
  { name: '草图 (13) "SKETCH_...', icons: ["eyeOff", "sketch"], level: 1, dim: true },
  { name: "旋转 (14)", icons: ["eye", "revolve"], level: 1 },
  { name: "细分体 (15)", icons: ["eye", "subdiv"], level: 1, last: true, current: true },
];
const emptyRows = Array.from({ length: 30 }, (_, i) => i);

function PartNavigator() {
  return (
    <Navigator>
      <NavTitle>
        <span>
          <Icon name="part" size={16} />
          部件导航器
        </span>
        <Maximize aria-label="最大化" />
      </NavTitle>
      <TreeBox>
        <TreeScroll>
          <Tree>
            <colgroup>
              <col width="196" />
              <col width="24" />
              <col width="24" />
              <col />
            </colgroup>
            <thead>
              <tr>
                <th>
                  <SortHead>
                    名称
                    <svg width="9" height="5" viewBox="0 0 9 5">
                      <path d="M0 5h9L4.500 0z" />
                    </svg>
                  </SortHead>
                </th>
                <th>当</th>
                <th>最</th>
                <th>附注</th>
              </tr>
            </thead>
            <tbody>
              {treeRows.map((r) => (
                <tr key={r.name}>
                  <td>
                    <TreeName $level={r.level} $dim={r.dim} $bold={r.current}>
                      <Branch box={r.box} first={r.first} last={r.last} />
                      {r.icons.map((n) => (
                        <Icon key={n} name={n} />
                      ))}
                      <span>{r.name}</span>
                    </TreeName>
                  </td>
                  <td>{r.current && <Icon name="nodes" />}</td>
                  <td>{(r.level || r.ok) && <Icon name="tick" />}</td>
                  <td />
                </tr>
              ))}
              {emptyRows.map((i) => (
                <tr key={i}>
                  <td />
                  <td />
                  <td />
                  <td />
                </tr>
              ))}
            </tbody>
          </Tree>
        </TreeScroll>
        <HScroll />
      </TreeBox>
      <Splitter />
      {["搜索", "相关性", "细节", "预览"].map((t) => (
        <Fold key={t}>
          <svg width="5" height="8" viewBox="0 0 5 8">
            <path d="M0 0l5 4-5 4z" fill={colors.link} />
          </svg>
          {t}
        </Fold>
      ))}
      <FoldSpace />
    </Navigator>
  );
}

/* ---------- graphics window ---------- */

const Graphics = styled.section`
  display: flex;
  flex-direction: column;
  flex: 1;
  min-width: 0;
`;

const FileTabs = styled.div`
  display: flex;
  flex: none;
  border-bottom: 2px solid ${colors.teal};
`;

const FileTab = styled.div`
  display: flex;
  align-items: center;
  gap: 4px;
  height: 25px;
  padding: 0 5px 0 6px;
  background: ${colors.teal};
  color: #fff;
`;

const Canvas = styled.div`
  position: relative;
  flex: 1;
  min-height: 0;
  overflow: hidden;
  background: #fff;
  border-bottom: 1px solid #e0e0e0;
`;

const Model = styled.svg`
  position: absolute;
  left: 430px;
  top: 185px;
  overflow: visible;
`;

const ViewTriad = styled.svg`
  position: absolute;
  left: 60px;
  bottom: 69px;
`;

// outline of a circle seen at the model's view angle; k scales the radius
function ring(cx, cy, k) {
  const pts = [];
  for (let i = 0; i < 96; i++) {
    const t = (i / 96) * Math.PI * 2;
    const x = cx + k * (106 * Math.sin(t) + 32 * Math.cos(t));
    const y = cy - k * 420 * Math.cos(t);
    pts.push(`${x.toFixed(1)} ${y.toFixed(1)}`);
  }
  return `M${pts.join("L")}Z`;
}

function Shade({ id, y1, y2, stops }) {
  return (
    <linearGradient id={id} gradientUnits="userSpaceOnUse" x1="0" x2="0" y1={y1} y2={y2}>
      {stops.map(([at, color]) => (
        <stop key={at} offset={at} stopColor={color} />
      ))}
    </linearGradient>
  );
}

const holes = [[384, 134], [457, 515], [382, 1063], [232, 1228]];

function Flange() {
  return (
    <Model width="260" height="480" viewBox="0 0 780 1440">
      <defs>
        <Shade id="rim" y1={-18} y2={1394} stops={[[0, "#ff9c08"], [0.1, "#ffa800"], [0.22, "#ffbe08"], [0.31, "#fff030"], [0.37, "#fff030"], [0.48, "#ffc80c"], [0.55, "#ffb000"], [0.66, "#ff9c12"], [0.72, "#d27a0a"], [0.83, "#a05c00"], [1, "#8c5000"]]} />
        <Shade id="hub" y1={250} y2={1103} stops={[[0, "#ff9c12"], [0.12, "#ffac00"], [0.25, "#ffc80c"], [0.38, "#fff030"], [0.46, "#ffe420"], [0.56, "#ffb000"], [0.7, "#ff9c12"], [0.8, "#c06e08"], [0.9, "#8c5200"], [1, "#9a5a00"]]} />
        <Shade id="bore" y1={297} y2={1046} stops={[[0, "#8c5200"], [0.1, "#9a5a04"], [0.2, "#f09412"], [0.35, "#ffac00"], [0.55, "#ffc80c"], [0.67, "#fff030"], [0.75, "#ffe420"], [0.86, "#ffb000"], [1, "#ff9c12"]]} />
        <Shade id="core" y1={440} y2={918} stops={[[0, "#8c5200"], [0.12, "#a86608"], [0.3, "#f09412"], [0.5, "#ffb400"], [0.8, "#fff030"], [1, "#ffb000"]]} />
        <linearGradient id="drill" x1="0" x2="0" y1="0" y2="1">
          <stop offset="0" stopColor="#b06800" />
          <stop offset=".3" stopColor="#ff9c12" />
          <stop offset=".65" stopColor="#fff030" />
          <stop offset="1" stopColor="#ffb000" />
        </linearGradient>
        <linearGradient id="ball" x1="0" x2="1" y1="0" y2="1">
          <stop offset="0" stopColor="#f4e07c" />
          <stop offset="1" stopColor="#a8841c" />
        </linearGradient>
        <clipPath id="inBore">
          <path d={ring(190, 671, 0.893)} />
        </clipPath>
        <clipPath id="inCore">
          <path d={ring(280, 679, 0.57)} />
        </clipPath>
      </defs>
      <g stroke="#222" strokeWidth="2.500">
        <path d={ring(446, 688, 1.68)} fill="url(#rim)" />
        <path d="M363-30L500-18V688L392 1394l-137-12z" fill="url(#rim)" stroke="none" />
        <path d="M363-30L500-18M255 1382l137 12" />
        <path d={ring(309, 676, 1.68)} fill="#b06800" />
        {holes.map(([x, y]) => (
          <ellipse key={y} cx={x} cy={y} rx="10" ry="43" transform={`rotate(3 ${x} ${y})`} fill="url(#drill)" />
        ))}
        <path d={ring(310, 683, 1)} fill="url(#hub)" />
        <path d="M222 250l120 13v420L278 1103l-120-13z" fill="url(#hub)" stroke="none" />
        <path d="M222 250l120 13M158 1090l120 13" />
        <path d={ring(190, 670, 1)} fill="#b06800" />
        <path d={ring(190, 671, 0.893)} fill="url(#bore)" />
        <g clipPath="url(#inBore)">
          <path d={ring(280, 679, 0.893)} fill="#b06800" />
          <path d={ring(280, 679, 0.57)} fill="url(#core)" />
          <g clipPath="url(#inCore)">
            <path d={ring(310, 682, 0.57)} fill="url(#core)" />
          </g>
        </g>
        <path d={ring(190, 671, 0.893)} fill="none" />
      </g>

      <path d="M262 632l26-190 50 40 192 18-22 180M400 654l60-2 55 46" fill="none" stroke="#d8d8d8" strokeWidth="2.500" />
      <g fill="none" strokeLinecap="round">
        <path d="M312 670l40-300" stroke="#8c8c8c" strokeWidth="13" />
        <path d="M312 670l40-300" stroke="#bebebe" strokeWidth="8" />
        <path d="M356 330l14-66" stroke="#bebebe" strokeWidth="9" />
        <path d="M308 683l292 20" stroke="#999" strokeWidth="12" />
        <path d="M308 681l292 20" stroke="#eee" strokeWidth="7" />
        <path d="M308 682l-46-50L215 590M262 632l158 20 95 46M325 467C440 466 518 560 515 700M325 467C285 468 264 560 262 630" stroke="#909098" strokeWidth="12" />
        <path d="M308 680l-46-50M262 630l158 20 95 46M325 465C440 464 516 558 514 698M323 466C285 468 262 560 260 628" stroke="#d8d8dc" strokeWidth="6" />
      </g>
      <path d="M354 328l12 77q-20 9-39-4z" fill="#d8b83c" stroke="#b8962c" />
      <path d="M583 685l80 25-80 13q-4-19 0-38z" fill="#dcbc3c" stroke="#b8962c" />
      <circle cx="240" cy="616" r="20" fill="#c8ac3c" />
      {[[307, 681, 19], [294, 497, 13], [476, 544, 13], [420, 658, 13]].map(([x, y, r]) => (
        <circle key={x} cx={x} cy={y} r={r} fill="url(#ball)" />
      ))}
      <path d="M646 702l34 10-34 6M650 711h35M706 704l12 18M718 704l-12 18" stroke="#1414e6" strokeWidth="3" fill="none" />
      <g fontFamily="Liberation Sans, sans-serif" fontSize="42">
        <text x="326" y="306" fill="#1e1ee6">ZC</text>
        <text x="264" y="514" fill="#1e1ee6">ZC</text>
        <text x="178" y="605" fill="#149628">YC</text>
        <text x="272" y="636" fill="#4a9628" fontSize="36">YC</text>
        <text x="420" y="740" fill="#d22828" fontSize="39">XC</text>
        <text x="666" y="728" fill="#d22828">XC</text>
      </g>
    </Model>
  );
}

function Triad() {
  return (
    <ViewTriad width="160" height="140" viewBox="0 0 480 420">
      <path d="M75 222l120 12 30 28-16 122-121-10-30-30zM75 222l29 29 121 11M104 251L88 374" fill="none" stroke="#8c8c8c" strokeWidth="3" />
      <path d="M144 242l12-92h-8l22-60 9 60h-9l-12 92z" fill="#0a32dc" />
      <path d="M220 303l80 7v-8l54 20-54 10v-8l-80-7z" fill="#dc3232" />
      <path d="M220 313l80 8v11l54-10-54-4-80-8z" fill="#962020" />
      <text x="163" y="75" fill="#3c50e6" fontSize="36" fontFamily="Liberation Sans, sans-serif">Z</text>
      <text x="369" y="336" fill="#d23c3c" fontSize="36" fontFamily="Liberation Sans, sans-serif">X</text>
    </ViewTriad>
  );
}

/* ---------- move object dialog ---------- */

const Dialog = styled.form`
  position: absolute;
  left: 0;
  top: 0;
  width: 322px;
  padding-bottom: 10px;
  background: ${colors.panel};
  border-right: 1px solid ${colors.line};
  border-bottom: 1px solid ${colors.line};
`;

const DialogTitle = styled.div`
  display: flex;
  align-items: center;
  gap: 7px;
  height: 24px;
  margin-bottom: 5px;
  padding: 0 6px;
  background: ${colors.teal};
  color: #fff;
  font-size: 14px;
  strong {
    flex: 1;
    font-weight: 400;
  }
`;

const TitleButtons = styled.span`
  display: flex;
  gap: 5px;
`;

const Block = styled.fieldset`
  min-width: 0;
  height: ${(p) => p.$h}px;
  margin: 0 6px 2px;
  padding: 3px 7px 0 9px;
  background: #fff;
  border: 1px solid ${colors.line};
`;

const BlockTitle = styled.h3`
  display: flex;
  align-items: center;
  gap: 8px;
  height: 16px;
  margin: 0;
  color: ${colors.link};
  font-size: 13px;
`;

const Field = styled.div`
  display: flex;
  align-items: center;
  gap: ${(p) => p.$gap || 4}px;
  height: ${(p) => p.$h}px;
`;

const FieldName = styled.label`
  flex: 1;
`;

const ObjectPick = styled.div`
  display: flex;
  gap: 2px;
  height: 32px;
  margin-top: 10px;
`;

const PickLabel = styled.div`
  display: flex;
  align-items: center;
  gap: 4px;
  flex: 1;
  background: #ffe078;
`;

const PickButton = styled.button`
  display: flex;
  align-items: center;
  justify-content: center;
  width: 32px;
  background: #ffe078;
  border: 1px solid #ffbe28;
`;

const Check = styled.label`
  display: flex;
  align-items: center;
  gap: 4px;
  white-space: nowrap;
  input {
    appearance: none;
    width: 13px;
    height: 13px;
    border: 1px solid #6e6e6e;
    border-radius: 3px;
    background: #f6f6f6;
  }
  input:checked {
    border-color: #005fb8;
    background: #005fb8;
  }
  input[type="radio"] {
    border-radius: 50%;
  }
  input[type="radio"]:checked {
    background: #fff;
    border: 4px solid #005fb8;
  }
`;

const CheckMark = styled.svg`
  margin-left: -17px;
  pointer-events: none;
`;

const Motion = styled.div`
  position: relative;
`;

const ComboIcon = styled.span`
  padding: 0 2px 0 5px;
`;

const Options = styled.ul`
  position: absolute;
  z-index: 2;
  right: 0;
  top: 100%;
  width: 138px;
  margin: -1px 0 0;
  padding: 0;
  list-style: none;
  background: #fff;
  border: 1px solid #6e6e6e;
`;

const Option = styled.li`
  display: flex;
  align-items: center;
  gap: 4px;
  height: 20px;
  padding-left: 2px;
  background: ${(p) => (p.$on ? "#daeaef" : "none")};
`;

const Hint = styled.div`
  position: absolute;
  z-index: 3;
  left: 100%;
  top: 0;
  display: flex;
  align-items: center;
  gap: 10px;
  width: 368px;
  height: 64px;
  padding: 0 12px;
  background: #fff;
  border: 1px solid #a0a0a0;
  color: ${colors.text};
  white-space: nowrap;
`;

const PreviewRow = styled.div`
  display: flex;
  align-items: center;
  justify-content: space-between;
  height: 26px;
  padding: 0 9px 0 11px;
`;

const GhostButton = styled.button`
  width: 60px;
  height: 24px;
  border: 1px solid #bebebe;
`;

const Collapse = styled.div`
  display: flex;
  justify-content: center;
  align-items: flex-end;
  height: 17px;
  margin: 0 6px;
  padding-bottom: 4px;
  border-bottom: 1px solid ${colors.line};
`;

const Actions = styled.div`
  display: flex;
  justify-content: flex-end;
  gap: 5px;
  padding: 8px 15px 0 0;
`;

const ActionButton = styled.button`
  width: 54px;
  height: 25px;
  border: 1px solid ${(p) => (p.disabled ? "#bebebe" : colors.teal)};
  color: ${(p) => (p.disabled ? "#aaa" : colors.teal)};
`;

const motions = [
  ["distance", "距离"], ["angle", "角度"], ["between", "点之间的距离"], ["radial", "径向距离"],
  ["p2p", "点到点"], ["threePoint", "根据三点旋转"], ["axisVec", "将轴与矢量对齐"],
  ["csys2", "坐标系到坐标系"], ["wcs", "动态"], ["xyzInc", "XYZ 增量"], ["eye", "显示快捷方式"],
];

function BlockHead({ children, closed }) {
  return (
    <BlockTitle>
      <svg width="7" height="8" viewBox="0 0 7 8">
        <path d={closed ? "M2 0l4 4-4 4z" : "M0 2h7L3.500 6z"} fill={colors.link} />
      </svg>
      {children}
    </BlockTitle>
  );
}

function MoveDialog() {
  return (
    <Dialog onSubmit={(e) => e.preventDefault()}>
      <DialogTitle>
        <Icon name="dialogGear" />
        <strong>移动对象</strong>
        <TitleButtons>
          {["reset", "question", "close"].map((n) => (
            <button type="button" key={n} aria-label={n}>
              <Icon name={n} />
            </button>
          ))}
        </TitleButtons>
      </DialogTitle>
      <Block $h={72}>
        <BlockHead>对象</BlockHead>
        <ObjectPick>
          <PickLabel>
            <Icon name="star" />
            选择对象 (0)
          </PickLabel>
          <PickButton type="button" aria-label="选择对象">
            <Icon name="crosshair" />
          </PickButton>
        </ObjectPick>
      </Block>
      <Block $h={123}>
        <BlockHead>变换</BlockHead>
        <Field $h={48}>
          <FieldName htmlFor="motion">Motion</FieldName>
          <Motion>
            <ComboWrap $w={138} $h={26}>
              <ComboIcon>
                <Icon name="wcs" />
              </ComboIcon>
              <select id="motion" defaultValue="动态">
                {motions.map(([, m]) => (
                  <option key={m}>{m}</option>
                ))}
              </select>
              <Caret big />
            </ComboWrap>
            <Options role="listbox" aria-label="Motion">
              {motions.map(([icon, m]) => (
                <Option key={m} role="option" $on={m === "动态"} aria-selected={m === "动态"}>
                  <Icon name={icon} />
                  {m}
                </Option>
              ))}
            </Options>
            <Hint role="tooltip">
              <svg width="38" height="56" viewBox="0 0 38 56">
                <g fill="none" strokeWidth="1.200">
                  <path d="M1.500 6v28" stroke="#0b7894" />
                  <path d="M1.500 33L25 20" stroke="#1ea01e" />
                  <path d="M1.500 33l24 16" stroke="#f02040" />
                </g>
                <g fill="#444" fontSize="12" fontFamily="Noto Sans, sans-serif">
                  <text x="5" y="15">Z</text>
                  <text x="26" y="23">Y</text>
                  <text x="28" y="51">X</text>
                </g>
              </svg>
              使用 WCS 动力学操纵器确定变换。该变换是不关联的。
            </Hint>
          </Motion>
        </Field>
        <Field $h={14}>
          <Icon name="tick" />
          指定方位
        </Field>
        <Field $h={42}>
          <Check>
            <input type="checkbox" />
            只移动手柄
          </Check>
        </Field>
      </Block>
      <Block $h={88}>
        <BlockHead>结果</BlockHead>
        <Field $h={40} $gap={16}>
          <Check>
            <input type="radio" name="result" defaultChecked />
            移动原先的
          </Check>
          <Check>
            <input type="radio" name="result" />
            复制原先的
          </Check>
        </Field>
        <Field $h={12}>图层选项</Field>
      </Block>
      <Block $h={25}>
        <BlockHead closed>设置</BlockHead>
      </Block>
      <PreviewRow>
        <Check>
          <input type="checkbox" defaultChecked />
          <CheckMark width="13" height="13" viewBox="0 0 13 13">
            <path d="M3.500 6.500l2 2.500 4-4.500" fill="none" stroke="#fff" />
          </CheckMark>
          预览
        </Check>
        <GhostButton type="button" aria-label="显示结果" />
      </PreviewRow>
      <Collapse>
        <svg width="9" height="5" viewBox="0 0 9 5">
          <path d="M0 5h9L4.500 0z" />
        </svg>
      </Collapse>
      <Actions>
        <ActionButton disabled>确定</ActionButton>
        <ActionButton disabled>应用</ActionButton>
        <ActionButton type="button">取消</ActionButton>
      </Actions>
    </Dialog>
  );
}

/* ---------- status bar ---------- */

const StatusBar = styled.footer`
  display: flex;
  align-items: center;
  height: 23px;
  flex: none;
  padding-left: 3px;
  border-top: 1px solid ${colors.edge};
  border-bottom: 1px solid #a8bfc0;
  font-size: 11px;
  font-weight: 700;
`;

const ImeBar = styled.div`
  position: absolute;
  right: 539px;
  bottom: 1px;
  display: flex;
  align-items: center;
  gap: 8px;
  height: 26px;
  padding: 0 4px 0 12px;
  background: #fff;
  border: 1px solid #b4cdeb;
  color: #0a6edc;
  font-size: 15px;
  font-weight: 700;
`;

const ImeLogo = styled.svg`
  position: absolute;
  left: -26px;
  bottom: 0;
`;

const Watermark = styled.div`
  position: absolute;
  right: 4px;
  bottom: 6px;
  color: #dcdcdc;
  font-family: "Liberation Sans", "Noto Sans CJK SC", sans-serif;
  font-size: 36px;
  font-weight: 300;
  line-height: 50px;
  text-shadow: 1px 1px 1px #888;
`;

const Shell = styled.div`
  position: relative;
  display: flex;
  flex-direction: column;
  height: 100vh;
`;

export default function App() {
  return (
    <Shell>
      <GlobalStyle />
      <AppHeader />
      <Ribbon />
      <SelectionBar />
      <Workspace>
        <ResourceBar>
          {resourceIcons.map((n) => (
            <ResourceButton key={n} $small={n === "gear"} $active={n === "part"} aria-label={n}>
              <Icon name={n} size={n === "gear" ? 17 : 24} />
            </ResourceButton>
          ))}
        </ResourceBar>
        <PartNavigator />
        <Graphics>
          <FileTabs>
            <FileTab>
              <Icon name="part" size={16} />
              旋转202478.prt
              <Icon name="fileEdit" />
              <Icon name="tabClose" />
            </FileTab>
          </FileTabs>
          <Canvas>
            <Flange />
            <Triad />
            <MoveDialog />
          </Canvas>
        </Graphics>
      </Workspace>
      <StatusBar>选择要移动的对象</StatusBar>
      <ImeBar>
        <ImeLogo width="34" height="32" viewBox="0 0 34 32">
          <path d="M1 6L26 1q3 0 4 3l3 21q0 4-3 4L9 32q-4 0-5-4L0 10q0-3 1-4z" fill="#f0501e" />
          <path d="M24 9c-6-3-13-1-13 3 0 5 12 2 12 7 0 4-8 5-13 2" fill="none" stroke="#fff" strokeWidth="4" />
        </ImeLogo>
        英
        {["comma", "imeMic", "keyboard", "shirt", "game", "apps", "imeGear"].map((n) => (
          <Icon key={n} name={n} />
        ))}
      </ImeBar>
      <Watermark>CSDN @山涧果子</Watermark>
    </Shell>
  );
}
